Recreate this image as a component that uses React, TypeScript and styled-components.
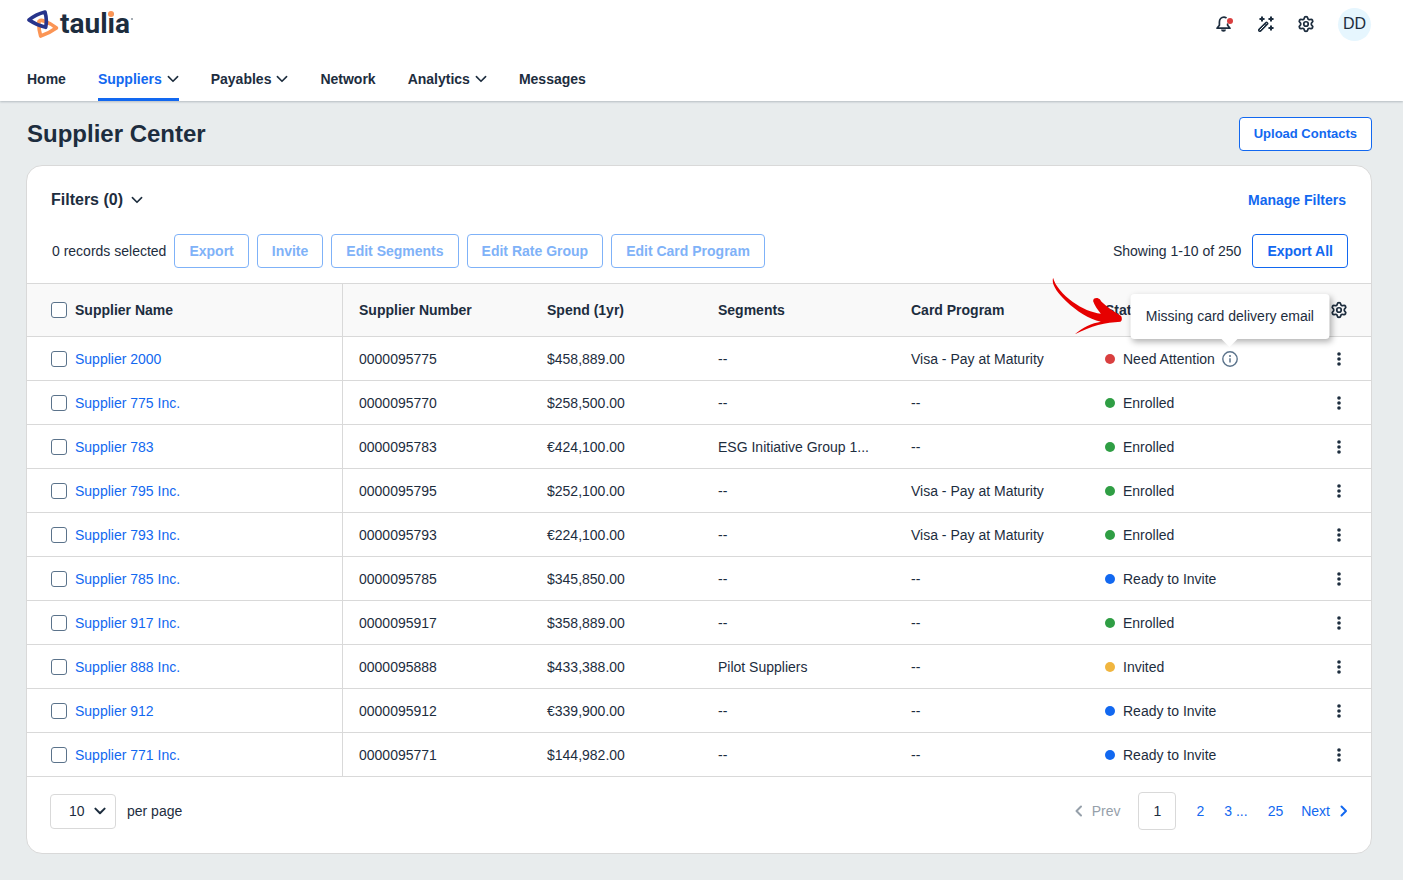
import React from "react";
import styled, { createGlobalStyle } from "styled-components";
import { Settings } from "lucide-react";

const color = {
  text: "#1d2d3e",
  link: "#1268f0",
  faded: "#7fb2f8",
  line: "#d9d9d9",
  page: "#e8eced",
};

const GlobalStyle = createGlobalStyle`
  *, *::before, *::after { box-sizing: border-box; }
  body {
    margin: 0;
    background: ${color.page};
    color: ${color.text};
    font-family: "Liberation Sans", Arial, sans-serif;
    font-size: 14px;
    line-height: 20px;
  }
  button, select, input { font: inherit; color: inherit; margin: 0; }
  a { text-decoration: none; color: ${color.link}; }
`;

const Header = styled.header`
  background: #fff;
  box-shadow: 0 1px 2px rgba(29, 45, 62, 0.25);
`;

const Brandbar = styled.div`
  display: flex;
  align-items: center;
  justify-content: space-between;
  height: 48px;
  padding: 0 32px 0 27px;
`;

const Brand = styled.a`
  display: flex;
  align-items: center;
  gap: 1px;
  color: ${color.text};
`;

const Wordmark = styled.span`
  position: relative;
  font-family: Roboto, sans-serif;
  font-size: 28px;
  font-weight: 700;
  line-height: 28px;
`;

const WordmarkDot = styled.span`
  position: absolute;
  top: 1px;
  right: 16px;
  width: 6px;
  height: 6px;
  border-radius: 50%;
  background: #fb9555;
`;

const TradeMark = styled.span`
  width: 2px;
  height: 2px;
  margin-bottom: 10px;
  border-radius: 50%;
  background: #8a939c;
`;

const Tools = styled.div`
  display: flex;
  align-items: center;
  gap: 23px;
`;

const IconButton = styled.button`
  display: flex;
  align-items: center;
  justify-content: center;
  padding: 0;
  border: 0;
  background: none;
  cursor: pointer;
`;

const Avatar = styled.button`
  width: 33px;
  height: 33px;
  padding: 0;
  border: 0;
  border-radius: 50%;
  background: #e6f6fe;
  font-size: 16px;
`;

const Nav = styled.nav`
  display: flex;
  gap: 32px;
  height: 53px;
  padding: 0 27px;
`;

const NavItem = styled.a<{ $active?: boolean }>`
  display: flex;
  align-items: center;
  gap: 5px;
  padding-top: 11px;
  border-bottom: 3px solid ${(p) => (p.$active ? color.link : "transparent")};
  border-radius: 2px 2px 0 0;
  color: ${(p) => (p.$active ? color.link : color.text)};
  font-weight: 700;
  svg { color: ${color.text}; }
`;

const Main = styled.main`
  padding: 16px 31px 26px 26px;
`;

const TitleRow = styled.div`
  display: flex;
  align-items: center;
  justify-content: space-between;
  margin-bottom: 14px;
  padding-left: 1px;
`;

const Title = styled.h1`
  margin: 0;
  font-size: 24px;
  font-weight: 700;
  line-height: 32px;
`;

const Button = styled.button<{ $small?: boolean }>`
  height: 34px;
  padding: 0 14px;
  border: 1px solid ${color.link};
  border-radius: 4px;
  background: #fff;
  color: ${color.link};
  font-size: ${(p) => (p.$small ? 13 : 14)}px;
  font-weight: 700;
  white-space: nowrap;
  &:disabled {
    border-color: ${color.faded};
    color: ${color.faded};
  }
`;

const Card = styled.section`
  border: 1px solid ${color.line};
  border-radius: 16px;
  background: #fff;
`;

const FilterRow = styled.div`
  display: flex;
  align-items: center;
  justify-content: space-between;
  height: 68px;
  padding: 0 25px 0 24px;
`;

const FilterToggle = styled.button`
  display: flex;
  align-items: center;
  gap: 8px;
  padding: 0;
  border: 0;
  background: none;
  font-size: 16px;
  font-weight: 700;
`;

const ManageLink = styled.a`
  font-weight: 700;
`;

const ActionRow = styled.div`
  display: flex;
  align-items: center;
  justify-content: space-between;
  height: 49px;
  padding: 0 23px 15px 25px;
`;

const Group = styled.div<{ $gap: number }>`
  display: flex;
  align-items: center;
  gap: ${(p) => p.$gap}px;
`;

const Table = styled.table`
  width: 100%;
  border-collapse: separate;
  border-spacing: 0;
  table-layout: fixed;
  border-top: 1px solid ${color.line};
`;

const HeadCell = styled.th`
  height: 53px;
  padding: 0 16px;
  border-bottom: 1px solid ${color.line};
  background: #f9f9f9;
  font-weight: 700;
  text-align: left;
  &:first-child { padding-left: 24px; border-right: 1px solid ${color.line}; }
  &:last-child { padding: 0; }
`;

const Cell = styled.td`
  height: 44px;
  padding: 0 16px;
  border-bottom: 1px solid ${color.line};
  white-space: nowrap;
  &:first-child { padding-left: 24px; border-right: 1px solid ${color.line}; }
  &:last-child { padding: 0; }
`;

const Centered = styled.div`
  display: flex;
  justify-content: center;
`;

const Checkbox = styled.input.attrs({ type: "checkbox" })`
  appearance: none;
  flex: none;
  width: 16px;
  height: 16px;
  border: 1px solid #5b738b;
  border-radius: 3px;
  background: #fff;
  &:checked { background: ${color.link}; }
`;

const Status = styled.div`
  display: flex;
  align-items: center;
  gap: 8px;
`;

const Dot = styled.span<{ $tone: string }>`
  width: 10px;
  height: 10px;
  border-radius: 50%;
  background: ${(p) => p.$tone};
`;

const InfoAnchor = styled.span`
  position: relative;
  display: flex;
  margin-left: -1px;
`;

const Tooltip = styled.span`
  position: absolute;
  bottom: 28px;
  left: 50%;
  width: 199px;
  padding: 12px 0 13px;
  border-radius: 4px;
  background: #fff;
  box-shadow: 2px 3px 6px rgba(0, 0, 0, 0.3);
  text-align: center;
  transform: translateX(-50%);
  &::after {
    content: "";
    position: absolute;
    top: 100%;
    left: 50%;
    margin-left: -8px;
    border: 8px solid transparent;
    border-top-color: #fff;
    border-bottom: 0;
  }
`;

const Pointer = styled.svg`
  position: absolute;
  top: -16px;
  right: 207px;
`;

const Footer = styled.div`
  display: flex;
  align-items: center;
  justify-content: space-between;
  height: 76px;
  padding: 0 23px 8px;
`;

const PerPage = styled.label`
  display: flex;
  align-items: center;
  gap: 11px;
`;

const SelectBox = styled.span`
  position: relative;
  display: flex;
  svg { position: absolute; right: 10px; top: 11px; pointer-events: none; }
`;

const Select = styled.select`
  appearance: none;
  width: 66px;
  height: 35px;
  padding: 0 18px;
  border: 1px solid ${color.line};
  border-radius: 4px;
  background: #fff;
`;

const Pager = styled.nav`
  display: flex;
  align-items: center;
  gap: 18px;
`;

const PageStep = styled.a<{ $off?: boolean }>`
  display: flex;
  align-items: center;
  gap: 9px;
  color: ${(p) => (p.$off ? "#96a0aa" : color.link)};
`;

const CurrentPage = styled.span`
  width: 38px;
  height: 38px;
  border: 1px solid ${color.line};
  border-radius: 4px;
  line-height: 37px;
  text-align: center;
`;

const Chevron = ({ size = 12, weight = 2 }: { size?: number; weight?: number }) => (
  <svg width={size} height={size} viewBox="0 0 12 12" fill="none" stroke="currentColor" strokeWidth={weight} strokeLinecap="round" strokeLinejoin="round" aria-hidden="true">
    <path d="M1.4 3.6 6 8.3l4.6-4.7" />
  </svg>
);

const StepChevron = ({ back }: { back?: boolean }) => (
  <svg width="9" height="12" viewBox="0 0 9 12" fill="none" stroke="currentColor" strokeWidth="2" strokeLinecap="round" strokeLinejoin="round" aria-hidden="true">
    <path d={back ? "M7 1.5 2.5 6 7 10.5" : "M2.5 1.5 7 6l-4.5 4.5"} />
  </svg>
);

const Logo = () => (
  <svg width="32" height="28" viewBox="0 0 96 84" fill="none" strokeLinejoin="round" aria-hidden="true">
    <path d="M36 34Q42 29 50 33Q72 40 88 54Q66 70 41 78Q34 56 36 34Z" stroke="#fb9555" strokeWidth="11" />
    <path d="M6 30Q26 13 54 6Q61 30 56 52Q30 46 6 30Z" stroke="#27348b" strokeWidth="11" />
  </svg>
);

const Bell = () => (
  <svg width="19" height="16" viewBox="0 0 19 16" fill="none" aria-hidden="true">
    <path d="M10 1.7C9.3 1.3 8.6 1.2 8 1.2 5.2 1.2 3.4 3.3 3.4 6v3.2L1 12.2h13l-2.4-3V8" stroke={color.text} strokeWidth="1.7" strokeLinecap="round" strokeLinejoin="round" />
    <path d="M5 13.5h5a2.5 2.3 0 0 1-5 0z" fill={color.text} />
    <circle cx="14" cy="5" r="3" fill="#d93f3f" />
  </svg>
);

const Wand = () => (
  <svg width="16" height="16" viewBox="0 0 16 16" aria-hidden="true">
    <path d="m1.900 14.100 6.600-6.600" stroke={color.text} strokeWidth="3.8" strokeLinecap="round" />
    <path d="m2 14 4.400-4.400M8 8l.3-.3" stroke="#fff" strokeWidth="1" strokeLinecap="round" />
    <path stroke={color.text} strokeWidth="2" strokeLinecap="round" d="M4 1.200v3.600M2.200 3h3.600M13 1.200v3.600M11.200 3h3.600M13 10.200v3.600M11.200 12h3.600" />
  </svg>
);

const Info = () => (
  <svg width="16" height="16" viewBox="0 0 16 16" fill="none" aria-hidden="true">
    <circle cx="8" cy="8" r="7.2" stroke="#5b738b" strokeWidth="1.4" />
    <path d="M8 7.200v4.200" stroke="#5b738b" strokeWidth="1.5" />
    <circle cx="8" cy="4.9" r="1" fill="#5b738b" />
  </svg>
);

const Kebab = () => (
  <svg width="4" height="14" viewBox="0 0 4 14" fill={color.text} aria-hidden="true">
    <circle cx="2" cy="2" r="1.8" />
    <circle cx="2" cy="7" r="1.8" />
    <circle cx="2" cy="12" r="1.8" />
  </svg>
);

const navItems = [
  { label: "Home" },
  { label: "Suppliers", menu: true, active: true },
  { label: "Payables", menu: true },
  { label: "Network" },
  { label: "Analytics", menu: true },
  { label: "Messages" },
];

const actions = ["Export", "Invite", "Edit Segments", "Edit Rate Group", "Edit Card Program"];
const headings = ["Supplier Number", "Spend (1yr)", "Segments", "Card Program", "Status"];
const columnWidths = [316, 188, 171, 193, 194, 218, 64];

const tones: Record<string, string> = {
  "Need Attention": "#d93f3f",
  Enrolled: "#2f9e44",
  "Ready to Invite": "#1268f0",
  Invited: "#f0b53f",
};

const rows = [
  ["Supplier 2000", "0000095775", "$458,889.00", "--", "Visa - Pay at Maturity", "Need Attention"],
  ["Supplier 775 Inc.", "0000095770", "$258,500.00", "--", "--", "Enrolled"],
  ["Supplier 783", "0000095783", "€424,100.00", "ESG Initiative Group 1...", "--", "Enrolled"],
  ["Supplier 795 Inc.", "0000095795", "$252,100.00", "--", "Visa - Pay at Maturity", "Enrolled"],
  ["Supplier 793 Inc.", "0000095793", "€224,100.00", "--", "Visa - Pay at Maturity", "Enrolled"],
  ["Supplier 785 Inc.", "0000095785", "$345,850.00", "--", "--", "Ready to Invite"],
  ["Supplier 917 Inc.", "0000095917", "$358,889.00", "--", "--", "Enrolled"],
  ["Supplier 888 Inc.", "0000095888", "$433,388.00", "Pilot Suppliers", "--", "Invited"],
  ["Supplier 912", "0000095912", "€339,900.00", "--", "--", "Ready to Invite"],
  ["Supplier 771 Inc.", "0000095771", "$144,982.00", "--", "--", "Ready to Invite"],
];

export default function App() {
  return (
    <>
      <GlobalStyle />
      <Header>
        <Brandbar>
          <Brand href="#">
            <Logo />
            <Wordmark>
              taulia
              <WordmarkDot />
            </Wordmark>
            <TradeMark />
          </Brand>
          <Tools>
            <IconButton aria-label="Notifications"><Bell /></IconButton>
            <IconButton aria-label="Assistant"><Wand /></IconButton>
            <IconButton aria-label="Settings"><Settings size={18} strokeWidth={2.3} /></IconButton>
            <Avatar>DD</Avatar>
          </Tools>
        </Brandbar>
        <Nav>
          {navItems.map((item) => (
            <NavItem key={item.label} href="#" $active={item.active}>
              {item.label}
              {item.menu && <Chevron weight={1.6} />}
            </NavItem>
          ))}
        </Nav>
      </Header>
      <Main>
        <TitleRow>
          <Title>Supplier Center</Title>
          <Button $small>Upload Contacts</Button>
        </TitleRow>
        <Card>
          <FilterRow>
            <FilterToggle>
              Filters (0)
              <Chevron weight={1.6} />
            </FilterToggle>
            <ManageLink href="#">Manage Filters</ManageLink>
          </FilterRow>
          <ActionRow>
            <Group $gap={8}>
              <span>0 records selected</span>
              {actions.map((name) => (
                <Button key={name} disabled>{name}</Button>
              ))}
            </Group>
            <Group $gap={11}>
              <span>Showing 1-10 of 250</span>
              <Button>Export All</Button>
            </Group>
          </ActionRow>
          <Table>
            <colgroup>
              {columnWidths.map((width, i) => (
                <col key={i} style={{ width }} />
              ))}
            </colgroup>
            <thead>
              <tr>
                <HeadCell>
                  <Group $gap={8}>
                    <Checkbox aria-label="Select all suppliers" />
                    Supplier Name
                  </Group>
                </HeadCell>
                {headings.map((name) => (
                  <HeadCell key={name}>{name}</HeadCell>
                ))}
                <HeadCell>
                  <Centered>
                    <IconButton aria-label="Table settings"><Settings size={18} strokeWidth={2.3} /></IconButton>
                  </Centered>
                </HeadCell>
              </tr>
            </thead>
            <tbody>
              {rows.map(([name, number, spend, segment, program, status]) => (
                <tr key={number}>
                  <Cell>
                    <Group $gap={8}>
                      <Checkbox aria-label={`Select ${name}`} />
                      <a href="#">{name}</a>
                    </Group>
                  </Cell>
                  <Cell>{number}</Cell>
                  <Cell>{spend}</Cell>
                  <Cell>{segment}</Cell>
                  <Cell>{program}</Cell>
                  <Cell>
                    <Status>
                      <Dot $tone={tones[status]} />
                      {status}
                      {status === "Need Attention" && (
                        <InfoAnchor>
                          <Info />
                          <Tooltip role="tooltip">
                            Missing card delivery email
                            <Pointer width="70" height="57" viewBox="15 20 210 171" fill="#e60000" aria-hidden="true">
                              <path d="M17 20C22 42 48 72 76 92C104 112 132 124 160 127C150 115 141 102 137 90Q136 79 150 80Q158 82 162 91C180 109 200 120 221 134Q226 146 219 151C175 153 130 163 82 189C104 168 134 155 160 151C124 144 88 120 56 90C34 68 14 45 15 24Z" />
                            </Pointer>
                          </Tooltip>
                        </InfoAnchor>
                      )}
                    </Status>
                  </Cell>
                  <Cell>
                    <Centered>
                      <IconButton aria-label={`Actions for ${name}`}><Kebab /></IconButton>
                    </Centered>
                  </Cell>
                </tr>
              ))}
            </tbody>
          </Table>
          <Footer>
            <PerPage>
              <SelectBox>
                <Select defaultValue="10">
                  <option>10</option>
                  <option>25</option>
                  <option>50</option>
                </Select>
                <Chevron weight={2} />
              </SelectBox>
              per page
            </PerPage>
            <Pager aria-label="Pagination">
              <PageStep href="#" $off><StepChevron back />Prev</PageStep>
              <Group $gap={20}>
                <CurrentPage>1</CurrentPage>
                <a href="#">2</a>
                <a href="#">3 ...</a>
                <a href="#">25</a>
              </Group>
              <PageStep href="#">Next<StepChevron /></PageStep>
            </Pager>
          </Footer>
        </Card>
      </Main>
    </>
  );
}
